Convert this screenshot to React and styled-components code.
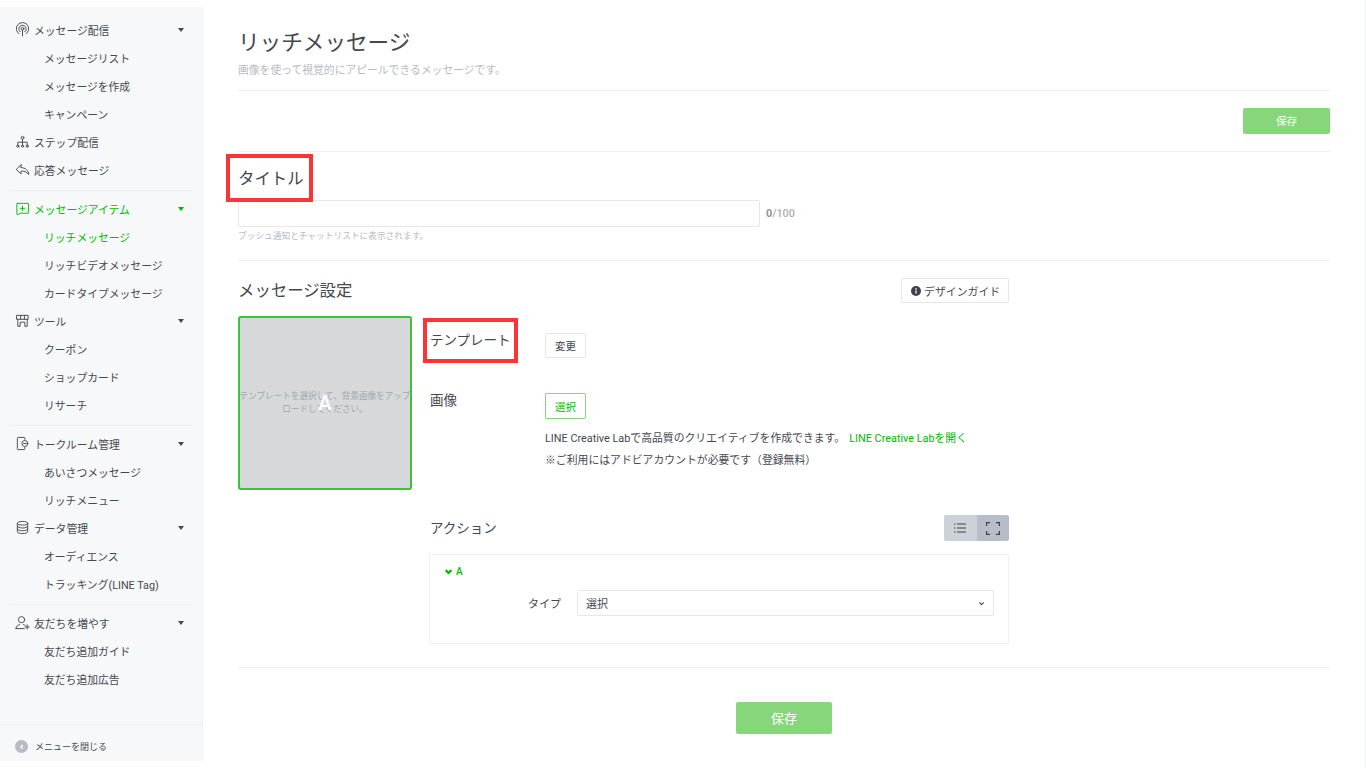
import React from 'react'
import styled, { createGlobalStyle } from 'styled-components'

const GREEN = '#00b900'
const TEXT = '#44484f'
const font = `Roboto, "Noto Sans CJK JP", sans-serif`

const GlobalStyle = createGlobalStyle`
  html, body { margin: 0; padding: 0; background: #fff; }
  body { font-family: ${font}; color: ${TEXT}; overflow: hidden; }
  * { box-sizing: border-box; }
`

const Icon = ({ children, size = 16 }) => (
  <svg width={size} height={size} viewBox="0 0 16 16" fill="none" stroke="currentColor" strokeWidth="1" strokeLinecap="round" strokeLinejoin="round">
    {children}
  </svg>
)

const BroadcastIcon = () => (
  <Icon>
    <path d="M4.2 12.6a6.6 6.6 0 1 1 7.6 0" />
    <path d="M5.5 10.4a3.9 3.9 0 1 1 5 0" />
    <circle cx="8" cy="7.2" r="1.5" />
    <path d="M8 8.7v6.2" />
  </Icon>
)
const StepIcon = () => (
  <Icon>
    <circle cx="8" cy="4" r="1.5" />
    <path d="M8 5.5v3.2M3 12V8.7h10V12M8 8.7V12" />
    <circle cx="3" cy="13" r="1.2" />
    <circle cx="8" cy="13" r="1.2" />
    <circle cx="13" cy="13" r="1.2" />
  </Icon>
)
const ReplyIcon = () => (
  <Icon>
    <path d="M6.5 3 1.2 8l5.3 4.6V9.7c3-.3 5.5.6 8.3 3.6-.6-4.6-3.500-7-8.300-7.400z" />
  </Icon>
)
const ItemIcon = () => (
  <Icon>
    <path d="M2.5 2.5h11.500a.5.5 0 0 1 .5.5v9.500a.5.5 0 0 1-.5.5H5.500l-2 1.500h-1a.5.5 0 0 1-.5-.5V3a.5.5 0 0 1 .5-.5z" />
    <path d="M8 5.500v4.500M5.800 7.800h4.400" />
  </Icon>
)
const StoreIcon = () => (
  <Icon>
    <path d="M2 2.500h12v4.200H2zM6 2.500v4.200M10 2.500v4.200" />
    <path d="M3 6.700v7.500h2.500v-4.400h5v4.400H13V6.700" />
  </Icon>
)
const RoomIcon = () => (
  <Icon>
    <path d="M10.500 3.600V2.400a.9.9 0 0 0-.9-.9H3.400a.9.9 0 0 0-.9.9v11.200a.9.9 0 0 0 .9.9h6.200a.9.9 0 0 0 .9-.9v-1.400" />
    <circle cx="10.500" cy="8" r="3.200" />
    <path d="M9 8h3" />
  </Icon>
)
const DataIcon = () => (
  <Icon>
    <ellipse cx="8" cy="3.500" rx="5.500" ry="2" />
    <path d="M2.500 3.500v9c0 1.100 2.500 2 5.500 2s5.500-.9 5.500-2v-9" />
    <path d="M2.500 6.500c0 1.100 2.500 2 5.500 2s5.500-.9 5.500-2M2.500 9.500c0 1.100 2.500 2 5.500 2s5.500-.9 5.500-2" />
  </Icon>
)
const FriendIcon = () => (
  <Icon>
    <circle cx="7" cy="5" r="3.300" />
    <path d="M1 14.500c.3-2.800 2-3.600 4-4.300M9 10.200c.8.300 1.500.6 2 1.100M1 14.500h9M13 10.500v4.500M10.800 12.800h4.400" />
  </Icon>
)

const menu = [
  [
    { icon: <BroadcastIcon />, label: 'メッセージ配信', caret: true, children: ['メッセージリスト', 'メッセージを作成', 'キャンペーン'] },
    { icon: <StepIcon />, label: 'ステップ配信' },
    { icon: <ReplyIcon />, label: '応答メッセージ' },
  ],
  [
    { icon: <ItemIcon />, label: 'メッセージアイテム', caret: true, active: true, children: ['リッチメッセージ', 'リッチビデオメッセージ', 'カードタイプメッセージ'] },
    { icon: <StoreIcon />, label: 'ツール', caret: true, children: ['クーポン', 'ショップカード', 'リサーチ'] },
  ],
  [
    { icon: <RoomIcon />, label: 'トークルーム管理', caret: true, children: ['あいさつメッセージ', 'リッチメニュー'] },
    { icon: <DataIcon />, label: 'データ管理', caret: true, children: ['オーディエンス', 'トラッキング(LINE Tag)'] },
  ],
  [
    { icon: <FriendIcon />, label: '友だちを増やす', caret: true, children: ['友だち追加ガイド', '友だち追加広告'] },
  ],
]

const Page = styled.div`
  display: flex;
  width: 1366px;
  height: 768px;
  padding: 7px 0 7px;
  background: #fff;
  border-right: 1px solid #f0f1f3;
`
const Sidebar = styled.aside`
  display: flex;
  flex-direction: column;
  width: 203px;
  flex: none;
  background: #f7f8fa;
  border-right: 1px solid #f0f1f3;
  padding-top: 9px;
`
const MenuGroup = styled.div`
  margin: 0 9px;
  padding-bottom: 6px;
  margin-bottom: 4px;
  border-bottom: 1px solid #eceef0;
  &:nth-child(4) { padding-bottom: 0; margin-bottom: 0; border-bottom: 0; }
`
const MenuRow = styled.div`
  display: flex;
  align-items: center;
  height: 28px;
  padding-left: 6px;
  padding-bottom: 1px;
  font-size: 10.800px;
  color: ${p => (p.$active ? GREEN : TEXT)};
  svg { flex: none; margin-right: 4px; width: 15px; height: 15px; }
`
const MenuLabel = styled.span`
  flex: 1;
`
const Caret = styled.i`
  width: 0;
  height: 0;
  margin: 1px 9px 0 0;
  border-left: 3.500px solid transparent;
  border-right: 3.500px solid transparent;
  border-top: 4px solid ${p => (p.$active ? GREEN : TEXT)};
`
const SubRow = styled.div`
  display: flex;
  align-items: center;
  height: 28px;
  padding-left: 35px;
  padding-bottom: 1px;
  font-size: 10.800px;
  color: ${p => (p.$active ? GREEN : TEXT)};
`
const SidebarFooter = styled.div`
  display: flex;
  align-items: center;
  gap: 7px;
  height: 37px;
  margin-top: auto;
  padding: 7px 0 0 15px;
  border-top: 1px solid #eceef0;
  font-size: 9px;
`
const CloseDot = styled.span`
  display: flex;
  align-items: center;
  justify-content: center;
  width: 13px;
  height: 13px;
  border-radius: 50%;
  background: #b7bcc4;
  svg { display: block; }
`
const Main = styled.main`
  flex: 1;
  min-width: 0;
  padding: 21px 35px 0 35px;
`
const PageTitle = styled.h1`
  margin: 0;
  font-size: 21.600px;
  font-weight: 400;
  line-height: 30px;
`
const Subtitle = styled.p`
  margin: 5px 0 0;
  font-size: 10.800px;
  line-height: 16px;
  color: #b7bcc4;
`
const Rule = styled.hr`
  margin: ${p => p.$margin};
  border: 0;
  border-top: 1px solid #f0f1f3;
`
const TopActions = styled.div`
  display: flex;
  justify-content: flex-end;
  margin-top: 17px;
`
const SaveButton = styled.button`
  width: ${p => (p.$large ? '96px' : '87px')};
  height: ${p => (p.$large ? '32px' : '26px')};
  padding: 0 0 ${p => (p.$large ? '2px' : '1px')};
  border: 0;
  border-radius: 2px;
  background: #87d67c;
  color: #fff;
  font-family: ${font};
  font-size: ${p => (p.$large ? '13px' : '10.500px')};
`
const Marked = styled.div`
  position: relative;
  &::after {
    content: '';
    position: absolute;
    inset: ${p => p.$inset};
    border: 4px solid #fb3535;
  }
`
const SectionHeading = styled.h2`
  margin: 0;
  font-size: 16.400px;
  font-weight: 400;
  line-height: 24px;
  white-space: nowrap;
`
const TitleHead = styled(Marked)`
  width: 64px;
  margin-top: 15px;
`
const InputRow = styled.div`
  display: flex;
  align-items: center;
  margin-top: 9px;
`
const TextInput = styled.div`
  width: 522px;
  height: 27px;
  border: 1px solid #e6e7ea;
  border-radius: 2px;
  background: #fff;
`
const Counter = styled.span`
  margin-left: 6px;
  font-size: 10.800px;
  font-weight: 500;
  color: #a9aeb5;
  b { font-weight: 700; color: #8d939c; }
`
const Hint = styled.p`
  margin: 3px 0 0;
  font-size: 8.700px;
  line-height: 12px;
  color: #b7bcc4;
`
const SettingsHead = styled.div`
  display: flex;
  align-items: center;
  justify-content: space-between;
  width: 771px;
  height: 25px;
  margin-top: 17px;
`
const GuideButton = styled.button`
  display: flex;
  align-items: center;
  gap: 3px;
  width: 108px;
  height: 25px;
  padding: 0 0 0 9px;
  border: 1px solid #e6e7ea;
  border-radius: 2px;
  background: #fff;
  color: ${TEXT};
  font-family: ${font};
  font-size: 10.900px;
`
const Settings = styled.div`
  display: flex;
  gap: 17px;
  width: 771px;
  margin-top: 13px;
`
const Preview = styled.div`
  position: relative;
  display: flex;
  align-items: center;
  justify-content: center;
  flex: none;
  width: 174px;
  height: 174px;
  box-shadow: inset 0 0 0 2px #35c735;
  border-radius: 3px;
  background: #d6d8da;
  font-size: 8.600px;
  line-height: 13px;
  text-align: center;
  color: #a3a8af;
`
const PreviewLetter = styled.span`
  position: absolute;
  top: 50%;
  left: 50%;
  transform: translate(-50%, -50%);
  font-size: 20px;
  font-weight: 500;
  color: #fff;
`
const Fields = styled.div`
  flex: 1;
  min-width: 0;
`
const FieldRow = styled.div`
  display: flex;
  margin-top: ${p => p.$top || '0'};
`
const FieldLabel = styled.div`
  width: 116px;
  flex: none;
  padding-left: 1px;
  font-size: 13.500px;
  line-height: 20px;
`
const TemplateLabel = styled(Marked)`
  width: 116px;
  flex: none;
  padding: 14px 0 0 1px;
  font-size: 13.500px;
  line-height: 20px;
`
const SmallButton = styled.button`
  display: block;
  width: 41px;
  height: ${p => (p.$green ? '26px' : '25px')};
  margin-top: ${p => p.$top};
  padding: 0;
  border: 1px solid ${p => (p.$green ? '#87d67c' : '#e6e7ea')};
  border-radius: 2px;
  background: #fff;
  color: ${p => (p.$green ? GREEN : TEXT)};
  font-family: ${font};
  font-size: 10.500px;
`
const Note = styled.p`
  margin: ${p => p.$margin};
  font-size: 10.850px;
  line-height: 16px;
  white-space: nowrap;
  a { margin-left: 4px; color: ${GREEN}; text-decoration: none; }
`
const ActionHead = styled.div`
  display: flex;
  align-items: center;
  justify-content: space-between;
  height: 26px;
  margin-top: 46px;
  padding-left: 1px;
  font-size: 13.500px;
`
const ActionLabel = styled.span`
  margin-bottom: 3px;
`
const Toggle = styled.div`
  display: flex;
  width: 65px;
  height: 26px;
  border-radius: 2px;
  overflow: hidden;
`
const ToggleItem = styled.span`
  display: flex;
  align-items: center;
  justify-content: center;
  flex: 1;
  background: ${p => (p.$on ? '#b7bdc8' : '#cdd1d8')};
`
const ActionPanel = styled.div`
  height: 90px;
  margin-top: 13px;
  padding: 10px 14px 0 14px;
  border: 1px solid #eff0f2;
`
const PanelHead = styled.div`
  display: flex;
  align-items: center;
  gap: 3px;
  height: 12px;
  font-size: 10px;
  font-weight: 500;
  color: ${GREEN};
`
const TypeRow = styled.div`
  display: flex;
  align-items: center;
  justify-content: flex-end;
  gap: 16px;
  margin-top: 13px;
  font-size: 11px;
`
const Select = styled.div`
  display: flex;
  align-items: center;
  justify-content: space-between;
  width: 417px;
  height: 26px;
  padding: 0 8px;
  border: 1px solid #e6e7ea;
  border-radius: 2px;
  background: #fff;
`
const BottomActions = styled.div`
  display: flex;
  justify-content: center;
  margin-top: 34px;
`

const Chevron = ({ size = 9, width = 2 }) => (
  <svg width={size} height={size} viewBox="0 0 8 8" fill="none" stroke="currentColor" strokeWidth={width}>
    <path d="M1.500 2.800 4 5.300l2.500-2.500" />
  </svg>
)

export default function App() {
  return (
    <>
      <GlobalStyle />
      <Page>
        <Sidebar>
          {menu.map((group, i) => (
            <MenuGroup key={i}>
              {group.map(item => (
                <div key={item.label}>
                  <MenuRow $active={item.active}>
                    {item.icon}
                    <MenuLabel>{item.label}</MenuLabel>
                    {item.caret && <Caret $active={item.active} />}
                  </MenuRow>
                  {item.children && item.children.map(child => (
                    <SubRow key={child} $active={child === 'リッチメッセージ'}>{child}</SubRow>
                  ))}
                </div>
              ))}
            </MenuGroup>
          ))}
          <SidebarFooter>
            <CloseDot>
              <svg width="6" height="6" viewBox="0 0 6 6" fill="none" stroke="#fff" strokeWidth="1.200"><path d="M3.800 1 1.800 3l2 2" /></svg>
            </CloseDot>
            メニューを閉じる
          </SidebarFooter>
        </Sidebar>
        <Main>
          <PageTitle>リッチメッセージ</PageTitle>
          <Subtitle>画像を使って視覚的にアピールできるメッセージです。</Subtitle>
          <Rule $margin="11px 0 0" />
          <TopActions><SaveButton>保存</SaveButton></TopActions>
          <Rule $margin="17px 0 0" />
          <TitleHead $inset="-13px -11px -11px -12px">
            <SectionHeading>タイトル</SectionHeading>
          </TitleHead>
          <InputRow>
            <TextInput />
            <Counter><b>0</b>/100</Counter>
          </InputRow>
          <Hint>プッシュ通知とチャットリストに表示されます。</Hint>
          <Rule $margin="18px 0 0" />
          <SettingsHead>
            <SectionHeading>メッセージ設定</SectionHeading>
            <GuideButton>
              <svg width="10" height="10" viewBox="0 0 10 10">
                <circle cx="5" cy="5" r="5" fill="#3d4149" />
                <path d="M5 4.400v3" stroke="#fff" strokeWidth="1.300" />
                <circle cx="5" cy="2.900" r=".8" fill="#fff" />
              </svg>
              デザインガイド
            </GuideButton>
          </SettingsHead>
          <Settings>
            <Preview>
              テンプレートを選択して、背景画像をアップロードしてください。
              <PreviewLetter>A</PreviewLetter>
            </Preview>
            <Fields>
              <FieldRow>
                <TemplateLabel $inset="2px 27px -5px -6px">テンプレート</TemplateLabel>
                <SmallButton $top="17px">変更</SmallButton>
              </FieldRow>
              <FieldRow $top="32px">
                <FieldLabel>画像</FieldLabel>
                <div>
                  <SmallButton $green $top="3px">選択</SmallButton>
                  <Note $margin="12px 0 0">LINE Creative Labで高品質のクリエイティブを作成できます。<a>LINE Creative Labを開く</a></Note>
                  <Note $margin="6px 0 0">※ご利用にはアドビアカウントが必要です（登録無料）</Note>
                </div>
              </FieldRow>
              <ActionHead>
                <ActionLabel>アクション</ActionLabel>
                <Toggle>
                  <ToggleItem>
                    <svg width="12" height="10" viewBox="0 0 12 10" fill="none" stroke="#3d4149" strokeWidth="1">
                      <path d="M3 1h9M3 5h9M3 9h9M0 1h1.500M0 5h1.500M0 9h1.500" />
                    </svg>
                  </ToggleItem>
                  <ToggleItem $on>
                    <svg width="14" height="13" viewBox="0 0 14 13" fill="none" stroke="#3d4149" strokeWidth="1.200">
                      <path d="M.6 4V.6H4M10 .6h3.400V4M.6 9v3.400H4M10 12.400h3.400V9" />
                    </svg>
                  </ToggleItem>
                </Toggle>
              </ActionHead>
              <ActionPanel>
                <PanelHead><Chevron />A</PanelHead>
                <TypeRow>
                  タイプ
                  <Select>
                    選択
                    <Chevron size={7} width={1.300} />
                  </Select>
                </TypeRow>
              </ActionPanel>
            </Fields>
          </Settings>
          <Rule $margin="23px 0 0" />
          <BottomActions><SaveButton $large>保存</SaveButton></BottomActions>
        </Main>
      </Page>
    </>
  )
}
